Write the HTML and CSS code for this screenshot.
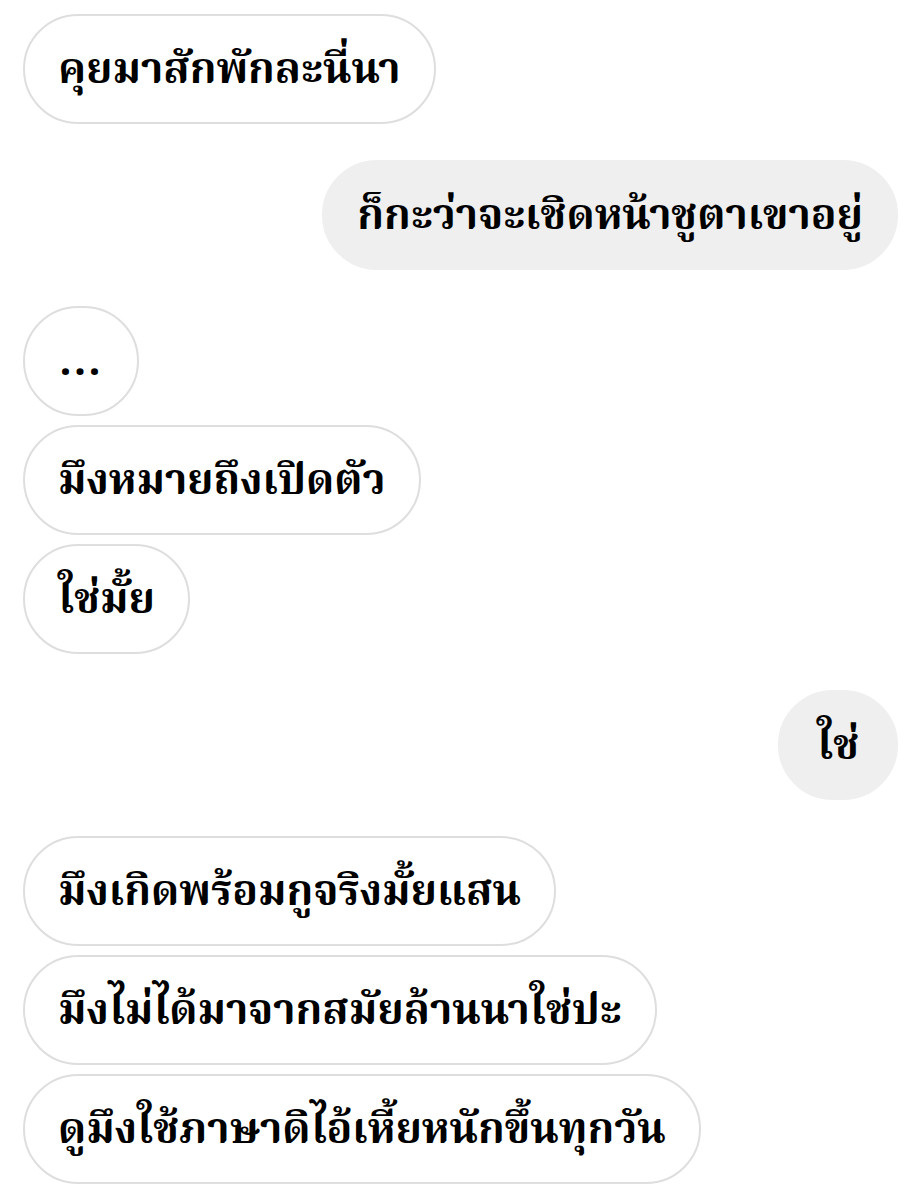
FILE: index.html
```html
<!DOCTYPE html>
<html>
<head>
    <meta charset="utf-8">
    <title>แชท</title>
    <link rel="stylesheet" href="styles.css">
</head>
<body>

<div class="chat">
    <div class="group">
        <div class="bubble in">คุยมาสักพักละนี่นา</div>
    </div>

    <div class="group out-group">
        <div class="bubble out">ก็กะว่าจะเชิดหน้าชูตาเขาอยู่</div>
    </div>

    <div class="group">
        <div class="bubble in dots">...</div>
        <div class="bubble in">มึงหมายถึงเปิดตัว</div>
        <div class="bubble in">ใช่มั้ย</div>
    </div>

    <div class="group out-group">
        <div class="bubble out">ใช่</div>
    </div>

    <div class="group">
        <div class="bubble in">มึงเกิดพร้อมกูจริงมั้ยแสน</div>
        <div class="bubble in">มึงไม่ได้มาจากสมัยล้านนาใช่ปะ</div>
        <div class="bubble in">ดูมึงใช้ภาษาดิไอ้เหี้ยหนักขึ้นทุกวัน</div>
    </div>
</div>

</body>
</html>
```

FILE: styles.css
```css
body {
    margin: 0;
    background-color: white;
    font-family: "Noto Serif Thai", "Noto Sans Thai", sans-serif;
    color: black;
}

.chat {
    display: flex;
    flex-direction: column;
    gap: 36px;
    padding: 14px 18px 0 23px;
}

.group {
    display: flex;
    flex-direction: column;
    align-items: flex-start;
    gap: 9px;
}

.out-group {
    align-items: flex-end;
}

.bubble {
    box-sizing: border-box;
    height: 110px;
    min-width: 120px;
    display: flex;
    align-items: center;
    justify-content: center;
    padding: 6px 33px 0;
    border-radius: 55px;
    font-size: 42.5px;
    font-weight: bold;
    white-space: nowrap;
}

.in {
    background-color: white;
    border: 2px solid #dedede;
}

.out {
    background-color: #efefef;
    border: 2px solid #efefef;
}

.dots {
    min-width: 116px;
    letter-spacing: 2px;
}
```
